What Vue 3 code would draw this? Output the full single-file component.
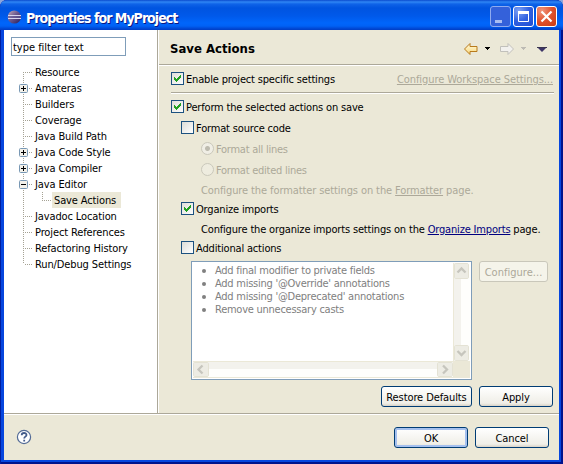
<script setup>
const tree = [
  { label: 'Resource' },
  { label: 'Amateras', box: '+' },
  { label: 'Builders' },
  { label: 'Coverage' },
  { label: 'Java Build Path' },
  { label: 'Java Code Style', box: '+' },
  { label: 'Java Compiler', box: '+' },
  { label: 'Java Editor', box: '-' },
  { label: 'Save Actions', child: true },
  { label: 'Javadoc Location' },
  { label: 'Project References' },
  { label: 'Refactoring History' },
  { label: 'Run/Debug Settings' }
]
const actions = [
  'Add final modifier to private fields',
  "Add missing '@Override' annotations",
  "Add missing '@Deprecated' annotations",
  'Remove unnecessary casts'
]
const check = 'M3 5h1v1h1v1h1v-1h1v-1h1v-1h1v-1h1v3h-1v1h-1v1h-1v1h-1v1h-1v-1h-1v-1h-1z'
</script>

<template>
  <div class="window">
    <header class="titlebar">
      <svg class="logo" width="16" height="16" viewBox="0 0 16 16">
        <defs>
          <linearGradient id="orb" x1="0" y1="0" x2="1" y2="1">
            <stop offset="0" stop-color="#c9aeb9" />
            <stop offset=".45" stop-color="#6d5a90" />
            <stop offset="1" stop-color="#251b57" />
          </linearGradient>
        </defs>
        <circle cx="7.3" cy="8" r="6.600" fill="url(#orb)" />
        <path d="M1 6.500h13M1 9.500h13" stroke="#d8d5ee" />
        <path d="M1 8h13" stroke="#675c9b" />
      </svg>
      <span class="title">Properties for MyProject</span>
      <div class="caption">
        <span class="cap dim"><svg width="21" height="21"><path d="M5 14h7v3h-7z" fill="#a9bdf2" /></svg></span>
        <span class="cap"><svg width="21" height="21"><path d="M5.500 6h10v9.500h-10z" fill="none" stroke="#fff" /><path d="M5 5h11v3h-11z" fill="#fff" /></svg></span>
        <span class="cap close"><svg width="21" height="21"><path d="M5.500 5.500l10 10M15.500 5.500l-10 10" stroke="#fff" stroke-width="2.200" /></svg></span>
      </div>
    </header>

    <main class="client">
      <div class="upper">
        <aside class="side">
          <div class="filter">type filter text</div>
          <ul class="tree">
            <li v-for="(n, i) in tree" :key="n.label" class="node" :class="{ child: n.child }">
              <svg class="lines" :width="n.child ? 33 : 14" height="16">
                <path v-if="i > 0" d="M4.500 0v8" class="dots" />
                <path v-if="i < tree.length - 1" d="M4.500 8v8" class="dots" />
                <path v-if="!n.child" d="M6 8.500h7" class="dots" />
                <template v-else>
                  <path d="M23.500 0v9" class="dots" />
                  <path d="M25 8.500h8" class="dots" />
                </template>
                <template v-if="n.box">
                  <rect x=".5" y="4.500" width="8" height="8" rx="1" fill="#f3f1ea" stroke="#7898b5" />
                  <path d="M2 8.500h5" stroke="#000" />
                  <path v-if="n.box === '+'" d="M4.500 6v5" stroke="#000" />
                </template>
              </svg>
              <span class="name">{{ n.label }}</span>
            </li>
          </ul>
        </aside>

        <section class="page">
          <div class="head">
            <h1>Save Actions</h1>
            <svg class="nav" width="90" height="16" viewBox="0 0 90 16">
              <defs>
                <linearGradient id="gold" x1="0" y1="0" x2="0" y2="1">
                  <stop offset="0" stop-color="#fffbe0" /><stop offset="1" stop-color="#f9d777" />
                </linearGradient>
              </defs>
              <path d="M3.500 8l5.500-5.500v3h7v5h-7v3z" fill="url(#gold)" stroke="#b87a1c" stroke-linejoin="round" />
              <path d="M24 6h5v1h-1v1h-1v1h-1v-1h-1v-1h-1z" fill="#000" />
              <path d="M52.500 8l-5.500-5.500v3h-7.500v5h7.500v3z" fill="#f2f1ee" stroke="#c1c0bb" stroke-linejoin="round" />
              <path d="M60 6h5v1h-1v1h-1v1h-1v-1h-1v-1h-1z" fill="#bdbbb4" />
              <path d="M76 6h10l-5 5z" fill="#3d3567" /><path d="M76 6.500h10" stroke="#3a3550" />
            </svg>
          </div>
          <div class="rule"></div>

          <div class="body">
            <div class="row enable">
              <svg class="cb" width="13" height="13"><path :d="check" fill="#21a121" /></svg>
              <span>Enable project specific settings</span>
              <a class="off ws">Configure Workspace Settings...</a>
            </div>
            <div class="rule inner"></div>
            <div class="row"><svg class="cb" width="13" height="13"><path :d="check" fill="#21a121" /></svg><span>Perform the selected actions on save</span></div>
            <div class="row sub g8"><i class="cb"></i><span>Format source code</span></div>
            <div class="row opt g8 off"><i class="radio on"></i><span>Format all lines</span></div>
            <div class="row opt g8 off"><i class="radio"></i><span>Format edited lines</span></div>
            <div class="note off">Configure the formatter settings on the <a>Formatter</a> page.</div>
            <div class="row sub"><svg class="cb" width="13" height="13"><path :d="check" fill="#21a121" /></svg><span>Organize imports</span></div>
            <div class="note">Configure the organize imports settings on the <a class="link">Organize Imports</a> page.</div>
            <div class="row sub"><i class="cb"></i><span>Additional actions</span></div>

            <div class="listrow">
              <div class="list">
                <ul class="items">
                  <li v-for="a in actions" :key="a"><i></i><span>{{ a }}</span></li>
                </ul>
                <div class="vbar">
                  <svg class="sb" width="15" height="16"><path d="M3.500 9.500l4-4 4 4" /></svg>
                  <svg class="sb" width="15" height="16"><path d="M3.500 6l4 4 4-4" /></svg>
                </div>
                <div class="hbar">
                  <svg class="sb" width="16" height="15"><path d="M9.500 3.500l-4 4 4 4" /></svg>
                  <svg class="sb" width="16" height="15"><path d="M6 3.500l4 4-4 4" /></svg>
                </div>
                <div class="corner"></div>
              </div>
              <button class="btn disabled">Configure...</button>
            </div>
            <div class="btns">
              <button class="btn restore">Restore Defaults</button>
              <button class="btn">Apply</button>
            </div>
          </div>
        </section>
      </div>

      <div class="rule"></div>
      <footer class="foot">
        <svg width="16" height="16" viewBox="0 0 16 16">
          <circle cx="8" cy="8" r="6.600" fill="#fff" stroke="#536b96" stroke-width="1.200" />
          <path d="M5.700 6.300c0-3 4.800-3 4.800-.3 0 1.600-2.300 1.700-2.300 3.400M8.200 10.700v1.700" fill="none" stroke="#455d8b" stroke-width="1.800" />
        </svg>
        <div class="okc">
          <button class="btn default">OK</button>
          <button class="btn">Cancel</button>
        </div>
      </footer>
    </main>
  </div>
</template>

<style>
body { margin: 0; background: #8ba5dc; overflow: hidden; }
</style>

<style scoped>
* { box-sizing: border-box; }
ul { list-style: none; margin: 0; padding: 0; }
.window {
  width: 563px; height: 464px; display: flex; flex-direction: column;
  padding: 0 4px 4px; border-radius: 7px 7px 0 0; overflow: hidden;
  background: #0646de;
  box-shadow: inset 1px 0 #001ea0, inset -2px 0 #00138c, inset 0 -2px #00138c;
  font: 11px/13px "DejaVu Sans Condensed", "DejaVu Sans", sans-serif;
  font-stretch: condensed;
  letter-spacing: -0.17px;
  color: #000;
}
.titlebar {
  height: 30px; flex: none; margin: 0 -4px; padding: 0 6px 0 7px; display: flex; align-items: center;
  background: linear-gradient(#0a4bce 0, #2f86f5 2px, #0f63e8 4px, #0054e0 8px, #0059ea 16px, #0066fb 23px, #0061f5 26px, #0044cf 29px, #003ec4 30px);
}
.logo { flex: none; margin-top: 3px; }
.title { margin: 5px 0 0 3px; font-size: 14px; line-height: 16px; font-weight: bold; color: #fff; letter-spacing: -0.97px; text-shadow: 1px 1px #0a1883; white-space: nowrap; }
.caption { margin: 3px 0 0 auto; display: flex; gap: 2px; }
.cap { width: 21px; height: 21px; border: 1px solid #fff; border-radius: 3px; overflow: hidden; background: radial-gradient(circle at 25% 20%, #7da1f4, #3060e0 50%, #1f4cd2); }
.cap svg { display: block; margin: -1px; }
.cap.dim { border-color: #8fabf0; background: #3461da; }
.cap.close { background: radial-gradient(circle at 25% 20%, #f0957c, #e0512d 50%, #cb3b13); }
.client { flex: 1; display: flex; flex-direction: column; background: #ebe8d7; min-height: 0; }
.upper { height: 383px; display: flex; flex: none; }
.rule { height: 2px; flex: none; background: #fff; border-top: 1px solid #aca899; }
.side { width: 155px; flex: none; background: #fff; border-right: 1px solid #fff; box-shadow: inset -1px 0 #aca899; padding: 7px 0 0 7px; }
.filter { width: 115px; height: 19px; border: 1px solid #7f9db9; padding: 3px 1px 0; white-space: nowrap; letter-spacing: -0.02px; }
.tree { padding: 8px 0 0 8px; letter-spacing: -0.12px; }
.node { display: flex; height: 16px; white-space: nowrap; }
.lines { flex: none; }
.dots { stroke: #a5a294; stroke-dasharray: 1 1; fill: none; }
.name { padding: 2px 2px 0; line-height: 14px; height: 16px; }
.child .name { background: #ebe8d7; width: 69px; }
.page { flex: 1; min-width: 0; }
.head { height: 34px; display: flex; align-items: center; justify-content: space-between; padding: 3px 8px 0 11px; }
h1 { margin: 0; font-size: 13px; line-height: 16px; letter-spacing: 0; }
.nav { flex: none; }
.body { padding: 6px 5px 0 12px; }
.row { display: flex; height: 13px; align-items: flex-start; gap: 2px; white-space: nowrap; }
.row > span, .row > a { line-height: 13px; padding-top: 1px; }
.enable { padding-right: 1px; }
.row > .ws { margin-left: auto; letter-spacing: -0.07px; }
.off { color: #aca899; }
.inner { margin: 7px 0 6px; }
.g8 { margin-top: 8px; }
.sub { padding-left: 10px; }
.opt { padding-left: 30px; letter-spacing: -0.25px; }
.cb { width: 13px; height: 13px; flex: none; border: 1px solid #1c5180; background: linear-gradient(135deg, #dcdcd7, #fff); }
svg.cb { border: 0; box-shadow: inset 0 0 0 1px #1c5180; }
.radio { width: 13px; height: 13px; border: 1px solid #cac8bb; border-radius: 50%; flex: none; background: #eeecdf; }
.radio.on { background: radial-gradient(circle, #bdbbaf 0 2px, #f0eee5 3px); }
.note { margin: 7px 0 6px 30px; height: 13px; padding-top: 1px; white-space: nowrap; }
.note.off { letter-spacing: -0.1px; }
a { text-decoration: underline; text-underline-offset: 1px; }
.link { color: #000080; }
.listrow { margin: 7px 0 0 20px; display: flex; gap: 7px; align-items: flex-start; }
.list { width: 281px; height: 119px; flex: none; border: 1px solid #7f9db9; padding: 1px; background: #fff; display: grid; grid-template: 1fr 17px / 1fr 17px; }
.items { padding-top: 1px; color: #808080; white-space: nowrap; letter-spacing: -0.25px; }
.items li { display: flex; align-items: center; height: 13px; }
.items i { width: 4px; height: 4px; border-radius: 2px; background: #808080; margin: 1px 9px 0 9px; }
.vbar { display: flex; flex-direction: column; justify-content: space-between; align-items: center; background: linear-gradient(90deg, #ebe8d7 1px, #f3f2ed 1px 8px, #fefefc 8px); }
.hbar { display: flex; justify-content: space-between; align-items: center; background: linear-gradient(#ebe8d7 1px, #f3f2ed 1px 8px, #fefefc 8px 16px, #ebe8d7 16px); }
.sb { background: #edece4; border: 1px solid #fff; border-radius: 2px; outline: 1px solid #e4e2d4; outline-offset: -1px; overflow: visible; }
.sb path { fill: none; stroke: #c6c5bd; stroke-width: 2.300; transform: translate(-1px, -1px); }
.corner { background: #ebe8d7; }
.btn { width: 74px; height: 21px; flex: none; padding: 1px 0 0; font: inherit; letter-spacing: -0.1px; color: #000; border: 1px solid #003c74; border-radius: 3px; background: linear-gradient(#fff, #f4f3ee 60%, #f0efe8 85%, #d8d2c6); text-align: center; white-space: nowrap; }
.btn.disabled { width: 69px; background: #f5f4ea; border-color: #c9c7ba; color: #aca899; letter-spacing: 0.03px; }
.btn.default { box-shadow: inset 0 0 0 2px #a5c0ee; }
.btns { display: flex; gap: 7px; justify-content: flex-end; margin-top: 6px; padding-right: 1px; }
.restore { width: 91px; }
.foot { flex: 1; display: flex; align-items: flex-start; justify-content: space-between; padding: 14px 10px 0 12px; }
.foot > svg { flex: none; }
.okc { display: flex; gap: 7px; margin-top: -2px; }
</style>
